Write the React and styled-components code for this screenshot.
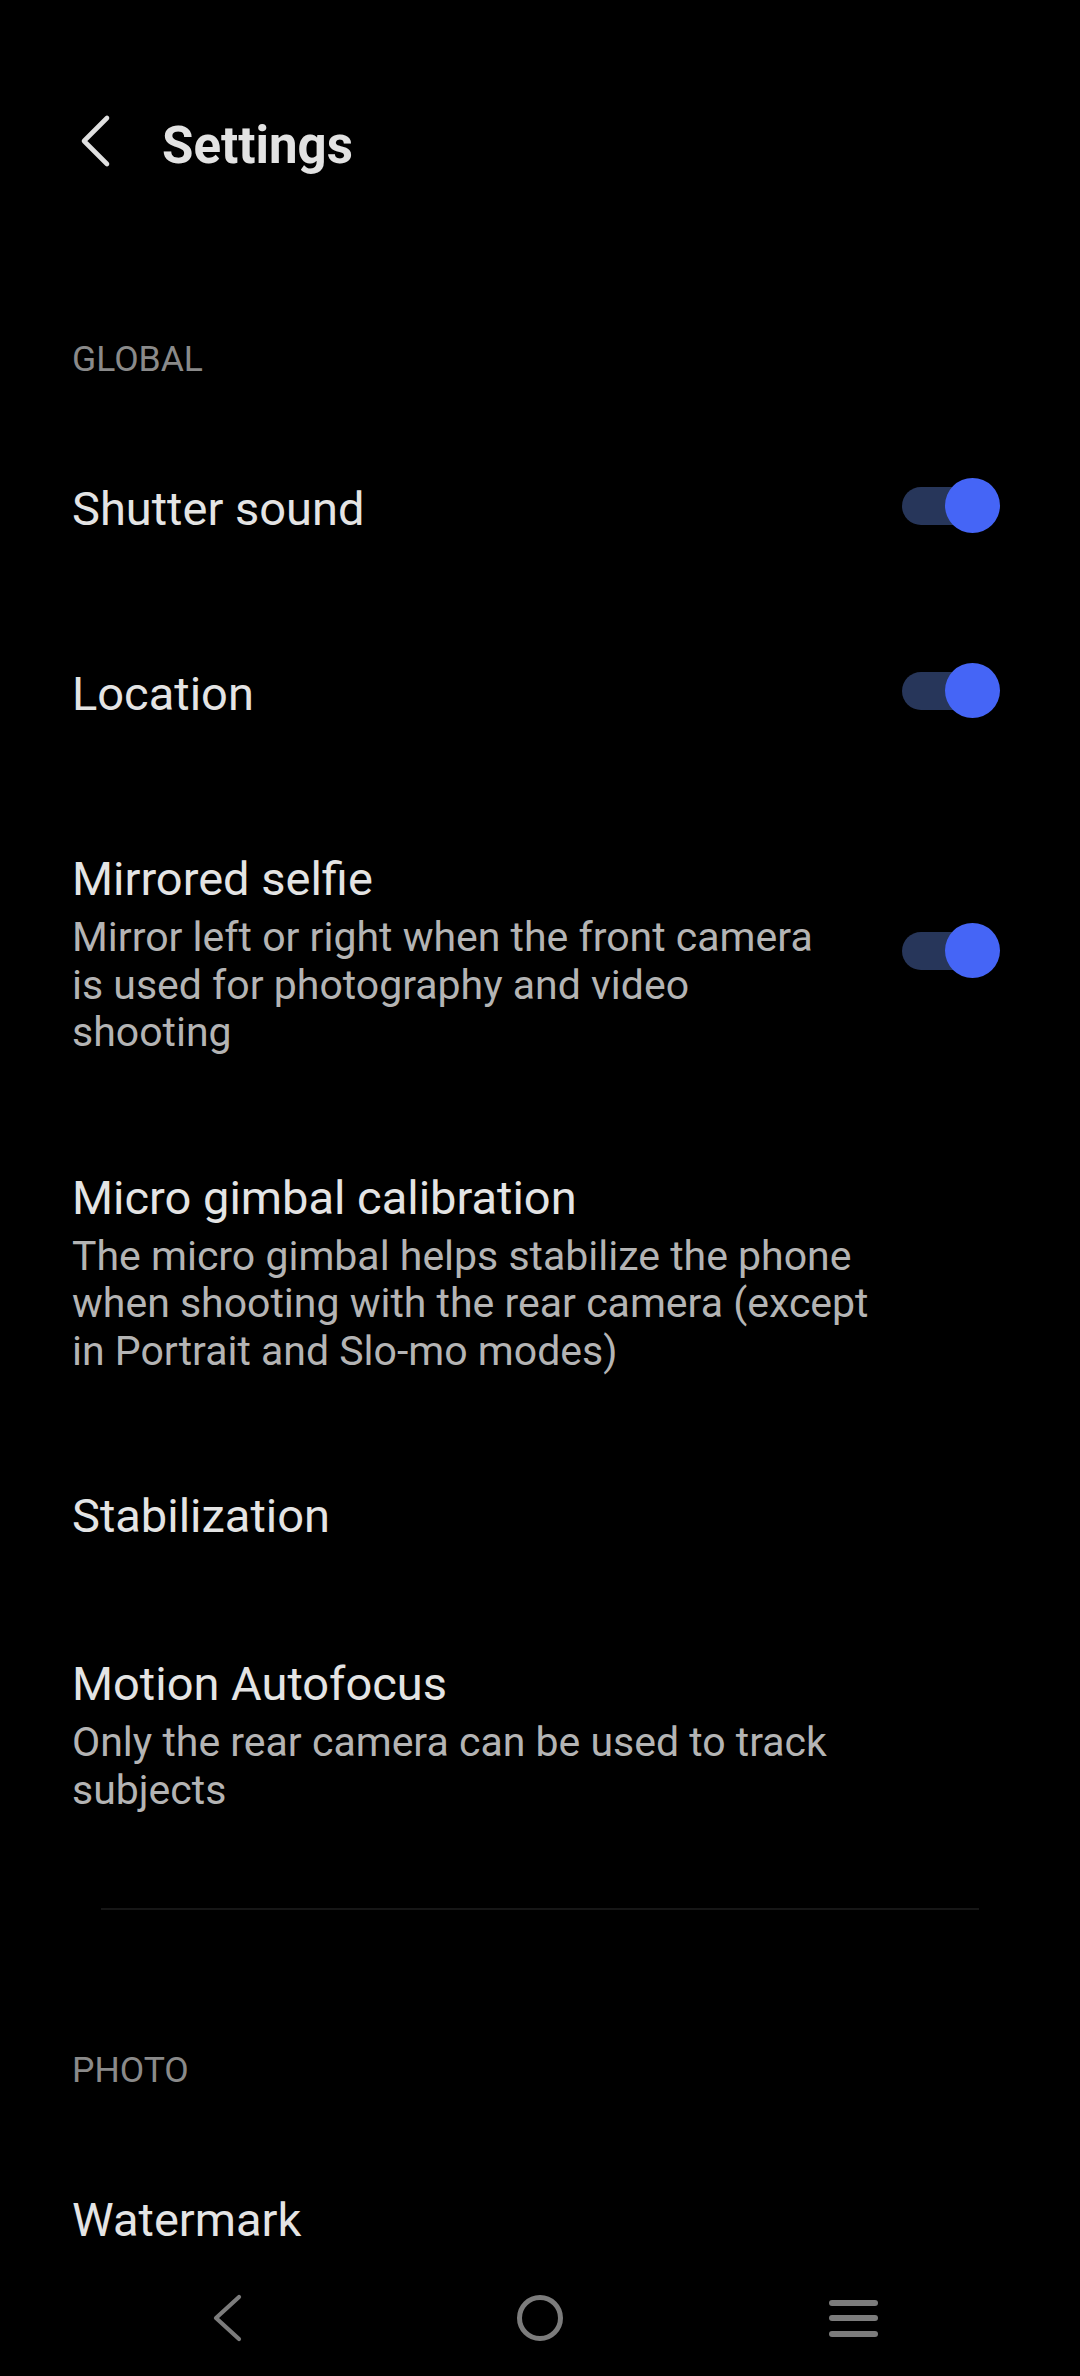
import React from 'react'
import styled, { createGlobalStyle } from 'styled-components'

const GlobalStyle = createGlobalStyle`
  html, body {
    margin: 0;
    padding: 0;
    background: #000000;
  }
  body {
    font-family: Roboto, "Noto Sans", "Liberation Sans", sans-serif;
    color: #e3e3e3;
    -webkit-font-smoothing: antialiased;
  }
`;

const settings = [
  {
    section: 'GLOBAL',
    items: [
      { title: 'Shutter sound', toggle: true },
      { title: 'Location', toggle: true },
      {
        title: 'Mirrored selfie',
        desc: 'Mirror left or right when the front camera is used for photography and video shooting',
        toggle: true,
      },
      {
        title: 'Micro gimbal calibration',
        desc: 'The micro gimbal helps stabilize the phone when shooting with the rear camera (except in Portrait and Slo-mo modes)',
      },
      { title: 'Stabilization' },
      {
        title: 'Motion Autofocus',
        desc: 'Only the rear camera can be used to track subjects',
      },
    ],
  },
  {
    section: 'PHOTO',
    items: [{ title: 'Watermark' }],
  },
];

const App = () => {
  return (
    <Page>
      <GlobalStyle />
      <Header>
        <BackIcon width="34" height="54" viewBox="0 0 34 54">
          <path d="M29 4 L6 27 L29 50" fill="none" stroke="#e0e0e0" strokeWidth="4.6" strokeLinecap="round" strokeLinejoin="round" />
        </BackIcon>
        <Title>Settings</Title>
      </Header>

      {settings.map((group, gi) => (
        <Section key={group.section}>
          {gi > 0 && <Divider />}
          <SectionLabel $first={gi === 0}>{group.section}</SectionLabel>
          {group.items.map((item) => (
            <Row key={item.title} $roomy={item.toggle && !item.desc}>
              <TextCol $toggle={item.toggle}>
                <RowTitle>{item.title}</RowTitle>
                {item.desc && <RowDesc>{item.desc}</RowDesc>}
              </TextCol>
              {item.toggle && (
                <Switch>
                  <Track />
                  <Thumb />
                </Switch>
              )}
            </Row>
          ))}
        </Section>
      ))}

      <NavBar>
        <NavButton>
          <svg width="34" height="48" viewBox="0 0 34 48">
            <path d="M29 3 L6 24 L29 45" fill="none" stroke="#7c7c7c" strokeWidth="4.2" strokeLinecap="round" strokeLinejoin="round" />
          </svg>
        </NavButton>
        <NavButton>
          <svg width="50" height="50" viewBox="0 0 50 50">
            <circle cx="25" cy="25" r="20.5" fill="none" stroke="#7c7c7c" strokeWidth="5" />
          </svg>
        </NavButton>
        <NavButton>
          <MenuLines>
            <span />
            <span />
            <span />
          </MenuLines>
        </NavButton>
      </NavBar>
    </Page>
  );
};

export default App;

const Page = styled.div`
  min-height: 2376px;
  background: #000000;
  padding-bottom: 140px;
`;

const Header = styled.div`
  display: flex;
  align-items: center;
  height: 120px;
  margin-top: 86px;
  padding-left: 78px;
  gap: 50px;
`;

const BackIcon = styled.svg`
  margin-bottom: 11px;
  flex-shrink: 0;
`;

const Title = styled.h1`
  margin: 0;
  font-size: 51px;
  line-height: 60px;
  font-weight: 700;
  color: #e2e2e2;
`;

const Section = styled.div`
  display: flex;
  flex-direction: column;
`;

const Divider = styled.div`
  height: 2px;
  margin: 37px 101px 0;
  background: #161616;
`;

const SectionLabel = styled.div`
  padding: ${(p) => (p.$first ? '133px' : '140px')} 72px 0;
  margin-bottom: 46px;
  font-size: 35.5px;
  line-height: 40px;
  color: #8a8a8a;
`;

const Row = styled.div`
  display: flex;
  align-items: center;
  gap: 78px;
  padding: 57px 80px ${(p) => (p.$roomy ? '74px' : '57px')} 72px;
`;

const TextCol = styled.div`
  flex: 1;
  max-width: ${(p) => (p.$toggle ? 'none' : '833px')};
  display: flex;
  flex-direction: column;
  gap: 8px;
`;

const RowTitle = styled.div`
  font-size: 47px;
  line-height: 54px;
  color: #e4e4e4;
`;

const RowDesc = styled.div`
  font-size: 41px;
  line-height: 47.5px;
  color: #b4b4b4;
`;

const Switch = styled.div`
  position: relative;
  width: 98px;
  height: 55px;
  flex-shrink: 0;
  margin-top: -7px;
`;

const Track = styled.div`
  position: absolute;
  left: 0;
  top: 50%;
  width: 80px;
  height: 38px;
  margin-top: -19px;
  border-radius: 19px;
  background: #27365a;
`;

const Thumb = styled.div`
  position: absolute;
  right: 0;
  top: 0;
  width: 55px;
  height: 55px;
  border-radius: 50%;
  background: #4565f6;
`;

const NavBar = styled.div`
  position: fixed;
  left: 0;
  right: 0;
  bottom: 0;
  height: 116px;
  background: #000000;
  display: flex;
  align-items: center;
  justify-content: center;
  gap: 253px;
`;

const NavButton = styled.div`
  width: 60px;
  height: 60px;
  display: flex;
  align-items: center;
  justify-content: center;
`;

const MenuLines = styled.div`
  display: flex;
  flex-direction: column;
  gap: 9.5px;
  span {
    display: block;
    width: 49px;
    height: 6px;
    border-radius: 3px;
    background: #7c7c7c;
  }
`;
